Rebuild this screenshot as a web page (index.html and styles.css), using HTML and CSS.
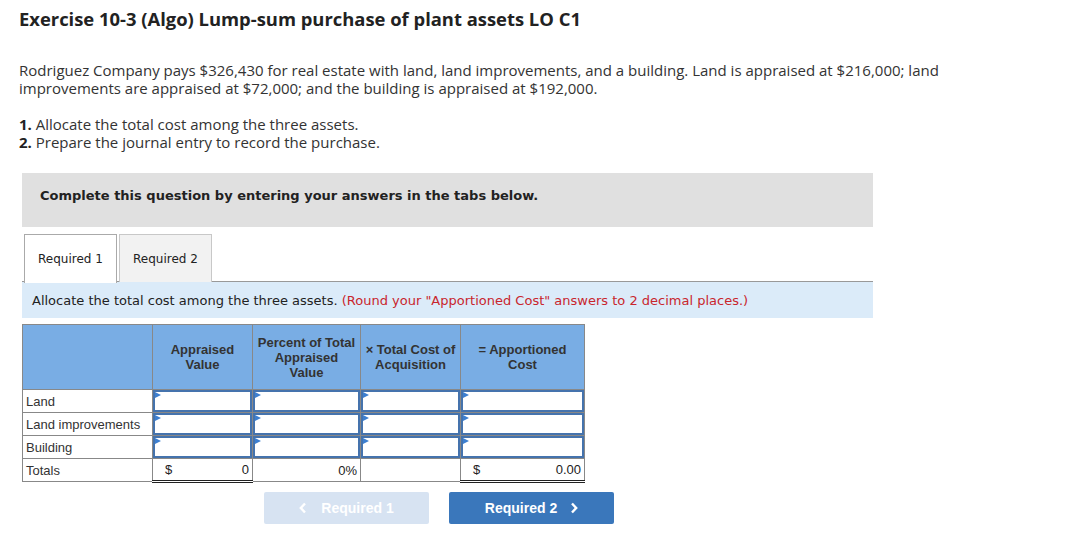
FILE: index.html
```html
<!DOCTYPE html>
<html>
<head>
<meta charset="utf-8">
<link rel="stylesheet" href="styles.css">
</head>
<body>
<div class="page">
  <h1 class="title">Exercise 10-3 (Algo) Lump-sum purchase of plant assets LO C1</h1>
  <p class="intro">Rodriguez Company pays $326,430 for real estate with land, land improvements, and a building. Land is appraised at $216,000; land improvements are appraised at $72,000; and the building is appraised at $192,000.</p>
  <p class="tasks"><b>1.</b> Allocate the total cost among the three assets.<br><b>2.</b> Prepare the journal entry to record the purchase.</p>

  <div class="instruct">Complete this question by entering your answers in the tabs below.</div>

  <div class="tabs">
    <div class="tab active">Required 1</div>
    <div class="tab">Required 2</div>
  </div>
  <div class="infobar">Allocate the total cost among the three assets. <span class="red">(Round your "Apportioned Cost" answers to 2 decimal places.)</span></div>

  <table class="grid">
    <thead>
      <tr>
        <th class="c1"></th>
        <th class="c2">Appraised<br>Value</th>
        <th class="c3">Percent of Total<br>Appraised<br>Value</th>
        <th class="c4">× Total Cost of<br>Acquisition</th>
        <th class="c5">= Apportioned<br>Cost</th>
      </tr>
    </thead>
    <tbody>
      <tr>
        <td class="label">Land</td>
        <td class="inp"><div class="box"></div></td>
        <td class="inp"><div class="box"></div></td>
        <td class="inp"><div class="box"></div></td>
        <td class="inp"><div class="box"></div></td>
      </tr>
      <tr>
        <td class="label">Land improvements</td>
        <td class="inp"><div class="box"></div></td>
        <td class="inp"><div class="box"></div></td>
        <td class="inp"><div class="box"></div></td>
        <td class="inp"><div class="box"></div></td>
      </tr>
      <tr>
        <td class="label">Building</td>
        <td class="inp"><div class="box"></div></td>
        <td class="inp"><div class="box"></div></td>
        <td class="inp"><div class="box"></div></td>
        <td class="inp"><div class="box"></div></td>
      </tr>
      <tr class="totals">
        <td class="label">Totals</td>
        <td class="money"><span>$</span><span>0</span></td>
        <td class="pct">0%</td>
        <td class="blank"></td>
        <td class="money"><span>$</span><span>0.00</span></td>
      </tr>
    </tbody>
  </table>

  <div class="nav">
    <button class="btn prev"><svg class="chev" width="8" height="12" viewBox="0 0 8 12"><polyline points="6,1.5 1.8,6 6,10.5" fill="none" stroke="#fff" stroke-width="2.4"/></svg>Required 1</button>
    <button class="btn next">Required 2<svg class="chev" width="8" height="12" viewBox="0 0 8 12"><polyline points="2,1.5 6.2,6 2,10.5" fill="none" stroke="#fff" stroke-width="2.4"/></svg></button>
  </div>
</div>
</body>
</html>
```
FILE: styles.css
```css
* { box-sizing: border-box; }
body { margin: 0; background: #fff; color: #222; }
.page { padding: 8px 0 0 19px; width: 880px; }
.title {
  font-family: "Open Sans", Lato, sans-serif;
  font-weight: 700;
  font-size: 18.4px;
  line-height: 22px;
  margin: 0;
  color: #222;
}
.intro, .tasks {
  font-family: "Open Sans", Lato, sans-serif;
  font-size: 15px;
  line-height: 18px;
  margin: 0;
  color: #333;
}
.intro { margin-top: 31px; width: 960px; }
.tasks { margin-top: 18px; }
.tasks b { color: #222; font-weight: 700; }
.instruct {
  margin: 22px 0 0 3px;
  width: 851px;
  height: 54px;
  background: #e0e0e0;
  font-family: Verdana, "DejaVu Sans", sans-serif;
  font-weight: 700;
  font-size: 13px;
  line-height: 16px;
  padding: 15px 0 0 18px;
  color: #222;
}
.tabs {
  margin: 7px 0 0 3px;
  width: 851px;
  display: flex;
  gap: 2px;
  padding-left: 2px;
  border-bottom: 1px solid #999;
  height: 48px;
}
.tab {
  width: 93px;
  height: 48px;
  font-family: Verdana, "DejaVu Sans", sans-serif;
  font-size: 12px;
  display: flex;
  align-items: center;
  justify-content: center;
  color: #222;
  background: #f2f2f2;
  border: 1px solid #c8c8c8;
  border-bottom: none;
}
.tab.active {
  background: #fff;
  border-color: #aaa;
  height: 49px;
}
.infobar {
  margin-left: 3px;
  width: 851px;
  height: 36px;
  background: #dbebf9;
  font-family: Verdana, "DejaVu Sans", sans-serif;
  font-size: 13px;
  display: flex;
  align-items: center;
  padding-left: 10px;
  color: #222;
  white-space: pre;
}
.red { color: #c9262d; }
.grid {
  margin: 6px 0 0 3px;
  border-collapse: collapse;
  font-family: "Liberation Sans", Arial, sans-serif;
  font-size: 13px;
  color: #222;
}
.grid th {
  background: #79ade4;
  border: 1px solid #888;
  height: 65px;
  font-weight: 700;
  line-height: 15px;
  color: #333;
  padding: 0;
  vertical-align: middle;
}
.grid th.c3 { vertical-align: top; padding-top: 10px; }
.c1 { width: 130px; }
.c2 { width: 100px; }
.c3 { width: 108px; }
.c4 { width: 100px; }
.c5 { width: 124px; }
.grid td {
  border: 1px solid #888;
  height: 23px;
  padding: 0;
}
.grid td.label { padding-left: 3px; color: #333; }
.grid td.inp { padding: 0; }
.box {
  height: 22px;
  border: 2px solid #4573ad;
  background: #fff;
  position: relative;
}
.box::before {
  content: "";
  position: absolute;
  left: 0;
  top: 0;
  border-left: 6px solid #3d7fd0;
  border-top: 3px solid transparent;
  border-bottom: 3px solid transparent;
}
.grid td.money {
  border-top: 1px solid #222;
  border-bottom: 3px double #222;
  padding: 0 3px 0 12px;
}
.grid td.money span:first-child { float: left; }
.grid td.money span:last-child { float: right; }
.grid td.pct { text-align: right; padding-right: 3px; }
.nav {
  margin: 9px 0 0 245px;
  display: flex;
  gap: 20px;
}
.btn {
  width: 165px;
  height: 32px;
  border: none;
  border-radius: 2px;
  font-family: "Liberation Sans", Arial, sans-serif;
  font-weight: 700;
  font-size: 14px;
  color: #fff;
  display: flex;
  align-items: center;
  justify-content: center;
  padding: 0;
}
.btn.prev { background: #d7e3f2; }
.btn.next { background: #3a77bb; }
.prev .chev { margin-right: 14px; }
.next .chev { margin-left: 13px; }
```
